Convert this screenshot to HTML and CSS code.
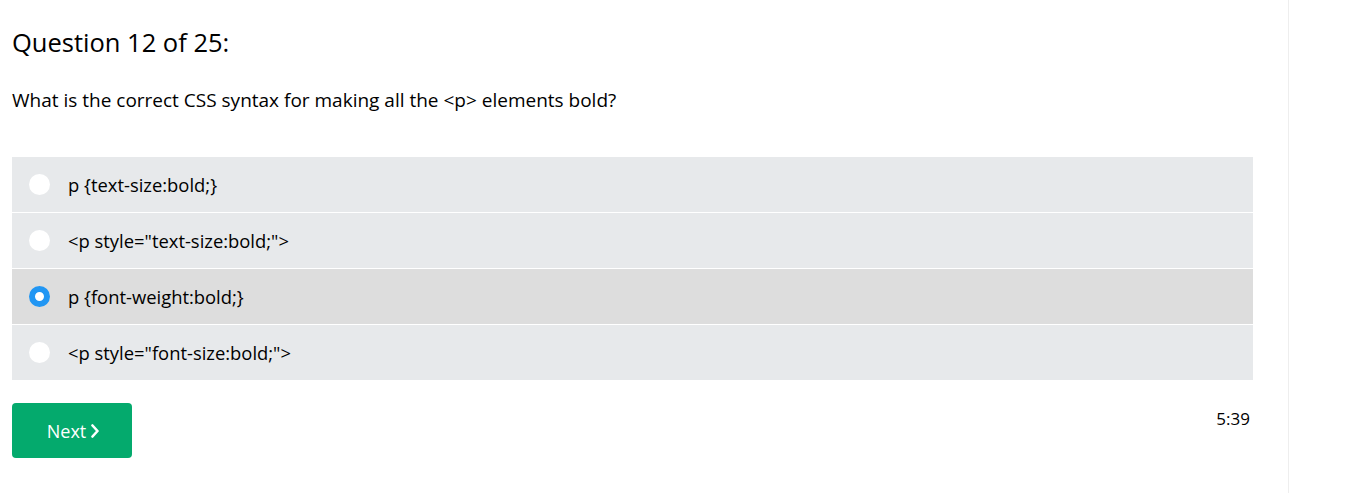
FILE: index.html
```html
<!DOCTYPE html>
<html>
<head>
<meta charset="utf-8">
<link rel="stylesheet" href="styles.css">
</head>
<body>
<div class="page">
  <main class="main">
    <h2 class="qtitle">Question 12 of 25:</h2>
    <p class="qtext">What is the correct CSS syntax for making all the &lt;p&gt; elements bold?</p>
    <div class="options">
      <label class="option"><span class="radio"></span><span class="otext">p {text-size:bold;}</span></label>
      <label class="option"><span class="radio"></span><span class="otext">&lt;p style="text-size:bold;"&gt;</span></label>
      <label class="option selected"><span class="radio checked"></span><span class="otext">p {font-weight:bold;}</span></label>
      <label class="option"><span class="radio"></span><span class="otext">&lt;p style="font-size:bold;"&gt;</span></label>
    </div>
    <div class="footer">
      <button class="next">Next <svg class="chev" viewBox="0 0 8 14" width="8" height="14"><path d="M1.5 1.5 L6.5 7 L1.5 12.5" fill="none" stroke="#fff" stroke-width="2.6" stroke-linecap="round" stroke-linejoin="round"/></svg></button>
      <span class="timer">5:39</span>
    </div>
  </main>
  <aside class="side"></aside>
</div>
</body>
</html>
```
FILE: styles.css
```css
html, body {
  margin: 0;
  padding: 0;
  background: #fff;
  color: #000;
  font-family: "Open Sans", "Noto Sans", sans-serif;
}
.page {
  display: flex;
  height: 493px;
}
.main {
  border-right: 1px solid #eeeeee;
  padding: 0 35px 0 12px;
  box-sizing: content-box;
  width: 1241px;
}
.side {
  flex: 1;
}
.qtitle {
  margin: 0;
  padding-top: 26px;
  font-size: 25.5px;
  font-weight: 400;
  line-height: 32px;
}
.qtext {
  margin: 30px 0 0;
  font-size: 19px;
  line-height: 24px;
}
.options {
  margin-top: 45px;
  display: flex;
  flex-direction: column;
}
.option {
  display: flex;
  align-items: center;
  height: 55px;
  background: #e7e9eb;
  border-bottom: 1px solid #fff;
  padding-left: 17px;
  font-size: 18.4px;
}
.option:last-child {
  border-bottom: none;
}
.option.selected {
  background: #dddddd;
}
.radio {
  width: 21px;
  height: 21px;
  border-radius: 50%;
  background: #fff;
  box-sizing: border-box;
  margin-right: 18px;
  flex: none;
}
.radio.checked {
  background: #fff;
  border: 6px solid #2196f3;
}
.footer {
  display: flex;
  justify-content: space-between;
  align-items: flex-start;
  margin-top: 23px;
}
.next {
  display: flex;
  align-items: center;
  justify-content: center;
  gap: 5px;
  width: 120px;
  height: 55px;
  background: #04aa6d;
  color: #fff;
  border: none;
  border-radius: 4px;
  font-family: inherit;
  font-size: 18px;
  padding: 0 0 0 2px;
}
.chev {
  display: block;
  margin-top: 1px;
}
.timer {
  font-size: 17px;
  margin-top: 4px;
  margin-right: 3px;
}
```
